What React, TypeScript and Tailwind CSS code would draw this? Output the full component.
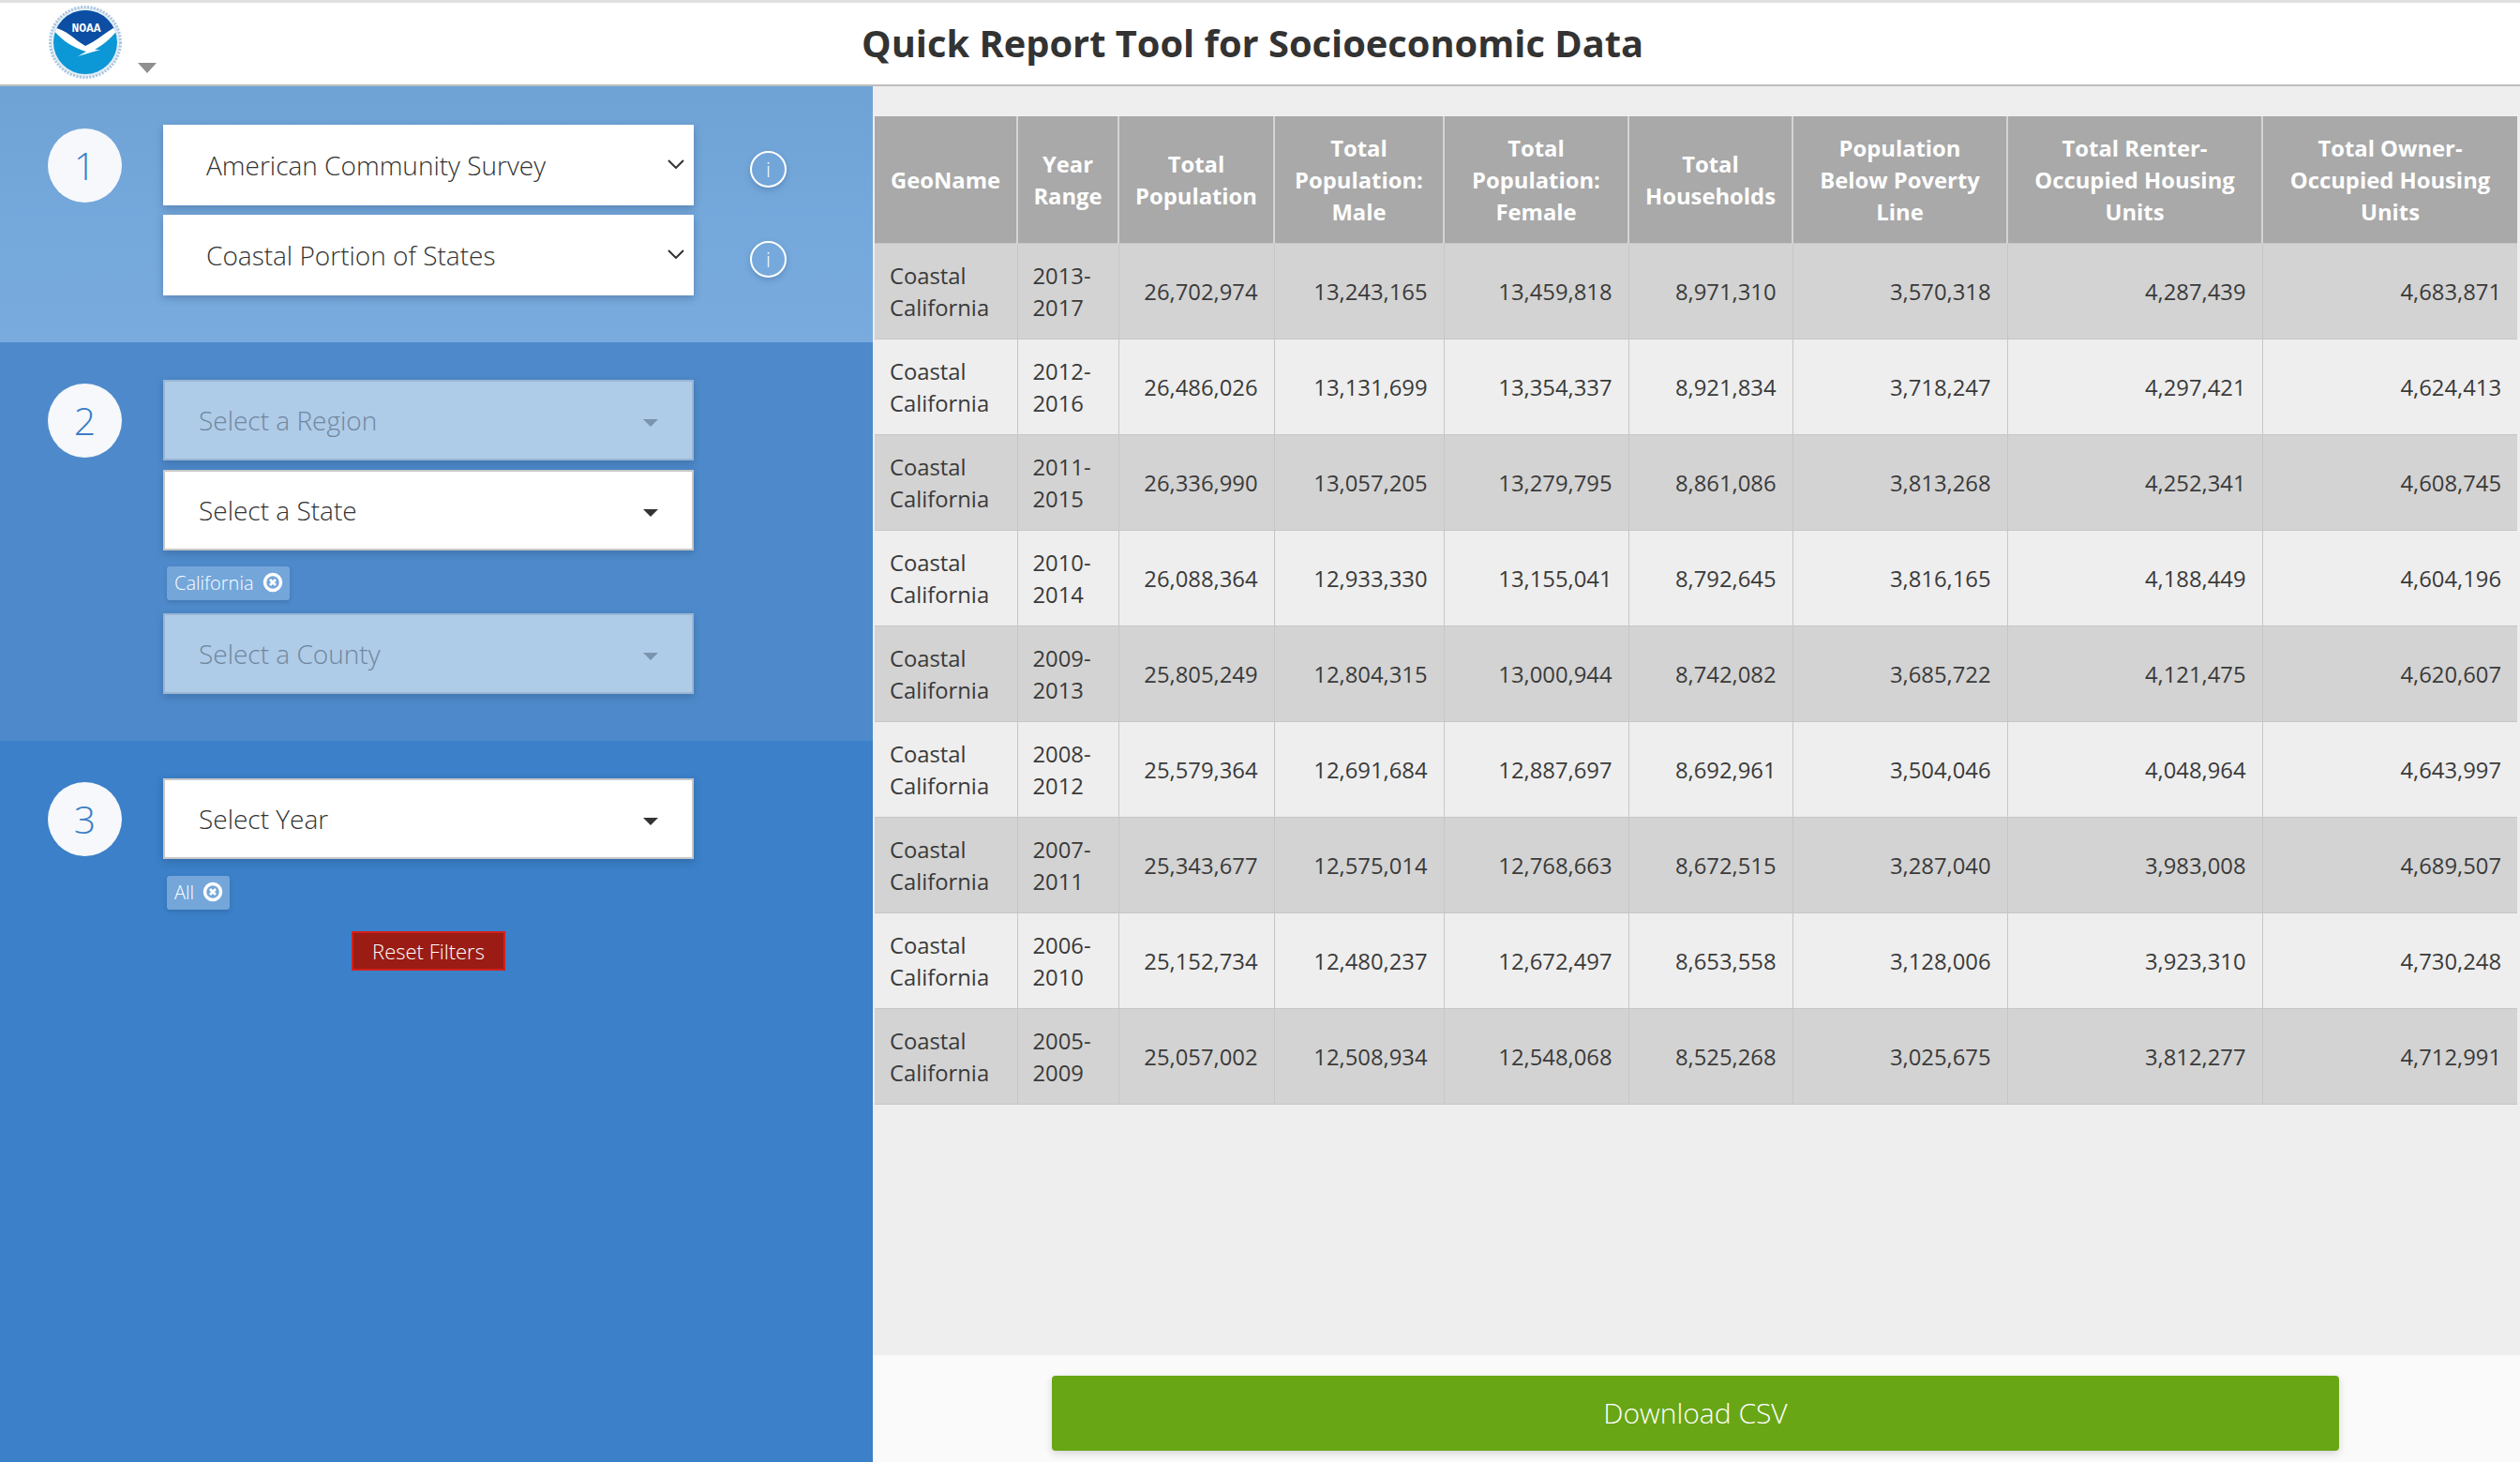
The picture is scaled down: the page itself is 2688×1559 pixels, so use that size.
import React from "react";

const rows: string[][] = [
  ["2013-2017", "26,702,974", "13,243,165", "13,459,818", "8,971,310", "3,570,318", "4,287,439", "4,683,871"],
  ["2012-2016", "26,486,026", "13,131,699", "13,354,337", "8,921,834", "3,718,247", "4,297,421", "4,624,413"],
  ["2011-2015", "26,336,990", "13,057,205", "13,279,795", "8,861,086", "3,813,268", "4,252,341", "4,608,745"],
  ["2010-2014", "26,088,364", "12,933,330", "13,155,041", "8,792,645", "3,816,165", "4,188,449", "4,604,196"],
  ["2009-2013", "25,805,249", "12,804,315", "13,000,944", "8,742,082", "3,685,722", "4,121,475", "4,620,607"],
  ["2008-2012", "25,579,364", "12,691,684", "12,887,697", "8,692,961", "3,504,046", "4,048,964", "4,643,997"],
  ["2007-2011", "25,343,677", "12,575,014", "12,768,663", "8,672,515", "3,287,040", "3,983,008", "4,689,507"],
  ["2006-2010", "25,152,734", "12,480,237", "12,672,497", "8,653,558", "3,128,006", "3,923,310", "4,730,248"],
  ["2005-2009", "25,057,002", "12,508,934", "12,548,068", "8,525,268", "3,025,675", "3,812,277", "4,712,991"],
];

const headers = [
  "GeoName",
  "Year Range",
  "Total Population",
  "Total Population: Male",
  "Total Population: Female",
  "Total Households",
  "Population Below Poverty Line",
  "Total Renter-Occupied Housing Units",
  "Total Owner-Occupied Housing Units",
];

function Logo() {
  return (
    <svg width="80" height="78" viewBox="0 0 80 78" className="block">
      <defs>
        <clipPath id="noaa-in">
          <circle cx="40" cy="39" r="34" />
        </clipPath>
      </defs>
      <circle cx="40" cy="39" r="37.5" fill="#e4edf5" stroke="#a8c4de" strokeWidth="3" strokeDasharray="2 1.5" />
      <g clipPath="url(#noaa-in)">
        <rect x="0" y="0" width="80" height="78" fill="#0c97d6" />
        <path d="M0 0H80V20C62 28 52 38 40 43C30 40 22 28 4 22Z" fill="#0b4ea3" />
        <path d="M4 23C18 24 28 36 40 43C52 38 62 28 78 19C72 32 60 41 50 47L56 47L32 54L41 49C30 46 14 38 4 23Z" fill="#fff" />
      </g>
      <text x="41" y="28" textAnchor="middle" fill="#fff" fontSize="13" fontWeight="700" fontFamily="'Liberation Mono', monospace">NOAA</text>
    </svg>
  );
}

function StepCircle({ n }: { n: number }) {
  return (
    <div className="w-[79px] h-[79px] rounded-full bg-[#f6f8fb] text-[#3a7ec6] text-[41px] font-light flex items-center justify-center shrink-0">
      {n}
    </div>
  );
}

function Chevron() {
  return (
    <svg width="18" height="10" viewBox="0 0 18 10" className="block">
      <path d="M1 1L9 9L17 1" fill="none" stroke="#333" strokeWidth="2" />
    </svg>
  );
}

function Caret({ muted }: { muted?: boolean }) {
  return (
    <svg width="16" height="8" viewBox="0 0 16 8" className="block mt-[5px]">
      <path d="M0 0H16L8 8Z" fill={muted ? "#7b94ad" : "#333"} />
    </svg>
  );
}

function TopSelect({ label }: { label: string }) {
  return (
    <div className="flex items-center">
      <div className="w-[566px] h-[86px] bg-white shadow-[0_3px_8px_rgba(40,70,110,0.35)] flex items-center pl-[46px] pr-[10px] justify-between text-[28px] font-light text-[#333]">
        <span>{label}</span>
        <span className="-mt-[2px]"><Chevron /></span>
      </div>
      <div className="ml-[60px] mt-[8px] w-[39px] h-[39px] rounded-full border-2 border-white flex items-center justify-center text-white text-[22px] font-light shadow-[0_3px_6px_rgba(40,70,110,0.25)]">
        i
      </div>
    </div>
  );
}

function DropSelect({ label, disabled }: { label: string; disabled?: boolean }) {
  return (
    <div
      className={
        disabled
          ? "w-[566px] h-[86px] bg-[#aecbe8] border-2 border-[#9ab6d3] shadow-[0_3px_8px_rgba(30,60,100,0.3)] flex items-center justify-between pl-[36px] pr-[36px] text-[28px] font-light text-[#70879d]"
          : "w-[566px] h-[86px] bg-white border-2 border-[#c8c8c8] shadow-[0_3px_8px_rgba(30,60,100,0.3)] flex items-center justify-between pl-[36px] pr-[36px] text-[28px] font-light text-[#333]"
      }
    >
      <span>{label}</span>
      <Caret muted={disabled} />
    </div>
  );
}

function Tag({ label }: { label: string }) {
  return (
    <div className="h-[36px] bg-[#74a6da] rounded-[3px] inline-flex items-center pl-[8px] pr-[7px] gap-[9px] text-[20px] font-light text-white shadow-[0_2px_4px_rgba(30,60,100,0.25)] self-start ml-[4px]">
      <span>{label}</span>
      <svg width="22" height="22" viewBox="0 0 22 22" className="block -mt-[2px]">
        <circle cx="11" cy="11" r="8.5" fill="none" stroke="#fff" strokeWidth="3.5" />
        <path d="M8 8L14 14M14 8L8 14" stroke="#fff" strokeWidth="2.8" />
      </svg>
    </div>
  );
}

export default function App() {
  return (
    <div className="w-full h-[1559px] flex flex-col overflow-hidden font-['Open_Sans',sans-serif] bg-white">
      <header className="h-[92px] shrink-0 bg-white border-t-[3px] border-t-[#e0e0e0] border-b-[2px] border-b-[#bdbdbd] flex items-center relative">
        <div className="ml-[51px] -mt-[3px]">
          <Logo />
        </div>
        <svg width="20" height="11" viewBox="0 0 20 11" className="ml-[16px] mt-[51px]">
          <path d="M0 0H20L10 11Z" fill="#8f8f8f" />
        </svg>
        <h1 className="absolute left-[919px] top-[17px] text-[39.8px] leading-[52px] font-bold text-[#333] whitespace-nowrap">
          Quick Report Tool for Socioeconomic Data
        </h1>
      </header>
      <div className="flex-1 flex min-h-0">
        <aside className="w-[931px] shrink-0 flex flex-col">
          <section className="h-[273px] shrink-0 bg-gradient-to-b from-[#6fa3d6] to-[#79abdf] flex pl-[51px] pt-[41px]">
            <div className="mt-[4px]"><StepCircle n={1} /></div>
            <div className="ml-[44px] flex flex-col gap-[10px]">
              <TopSelect label="American Community Survey" />
              <TopSelect label="Coastal Portion of States" />
            </div>
          </section>
          <section className="h-[425px] shrink-0 bg-[#4e8acb] flex pl-[51px] pt-[40px]">
            <div className="mt-[4px]"><StepCircle n={2} /></div>
            <div className="ml-[44px] flex flex-col">
              <DropSelect label="Select a Region" disabled />
              <div className="mt-[10px]"><DropSelect label="Select a State" /></div>
              <div className="mt-[17px] flex"><Tag label="California" /></div>
              <div className="mt-[14px]"><DropSelect label="Select a County" disabled /></div>
            </div>
          </section>
          <section className="flex-1 bg-[#3b80c8] flex pl-[51px] pt-[40px]">
            <div className="mt-[4px]"><StepCircle n={3} /></div>
            <div className="ml-[44px] flex flex-col w-[566px]">
              <DropSelect label="Select Year" />
              <div className="mt-[18px] flex"><Tag label="All" /></div>
              <button className="mt-[23px] self-center w-[164px] h-[42px] bg-[#9a1c14] border-2 border-[#d3201c] text-white text-[22px] font-light">
                Reset Filters
              </button>
            </div>
          </section>
        </aside>
        <main className="flex-1 flex flex-col bg-[#eeeeee] min-w-0">
          <div className="h-[1353px] shrink-0 pt-[32px] pl-[2px]">
            <table className="w-[1752px] table-fixed border-collapse text-[23.8px] leading-[34px] text-[#3a3a3a]">
              <colgroup>
                <col className="w-[152px]" />
                <col className="w-[108px]" />
                <col className="w-[166px]" />
                <col className="w-[181px]" />
                <col className="w-[197px]" />
                <col className="w-[175px]" />
                <col className="w-[229px]" />
                <col className="w-[272px]" />
                <col className="w-[272px]" />
              </colgroup>
              <thead>
                <tr className="h-[135px]">
                  {headers.map((h) => (
                    <th key={h} className="bg-[#a9a9a9] text-white font-bold text-center px-[16px] pt-[2px] border-x-2 border-[#d4d4d4] first:border-l-0 last:border-r-0 align-middle">
                      {h}
                    </th>
                  ))}
                </tr>
              </thead>
              <tbody>
                {rows.map((r, i) => (
                  <tr key={r[0]} className={i % 2 === 0 ? "h-[102px] bg-[#d3d3d3]" : "h-[102px] bg-[#eeeeee]"}>
                    <td className="pl-[16px] pr-[17px] pt-[2px] border border-[#c6c6c6] border-l-0">Coastal California</td>
                    <td className="pl-[16px] pr-[17px] pt-[2px] border border-[#c6c6c6] break-words">
                      {r[0].slice(0, 5)}
                      <br />
                      {r[0].slice(5)}
                    </td>
                    {r.slice(1).map((v, j) => (
                      <td key={j} className="px-[17px] pt-[2px] text-right border border-[#c6c6c6] last:border-r-0">
                        {v}
                      </td>
                    ))}
                  </tr>
                ))}
              </tbody>
            </table>
          </div>
          <div className="flex-1 bg-[#fafafa] flex justify-center pt-[22px] pr-[2px]">
            <button className="w-[1373px] h-[80px] pb-[2px] rounded-[4px] bg-[#68a615] text-white text-[30px] font-light shadow-[0_3px_8px_rgba(0,0,0,0.15)]">
              Download CSV
            </button>
          </div>
        </main>
      </div>
    </div>
  );
}
